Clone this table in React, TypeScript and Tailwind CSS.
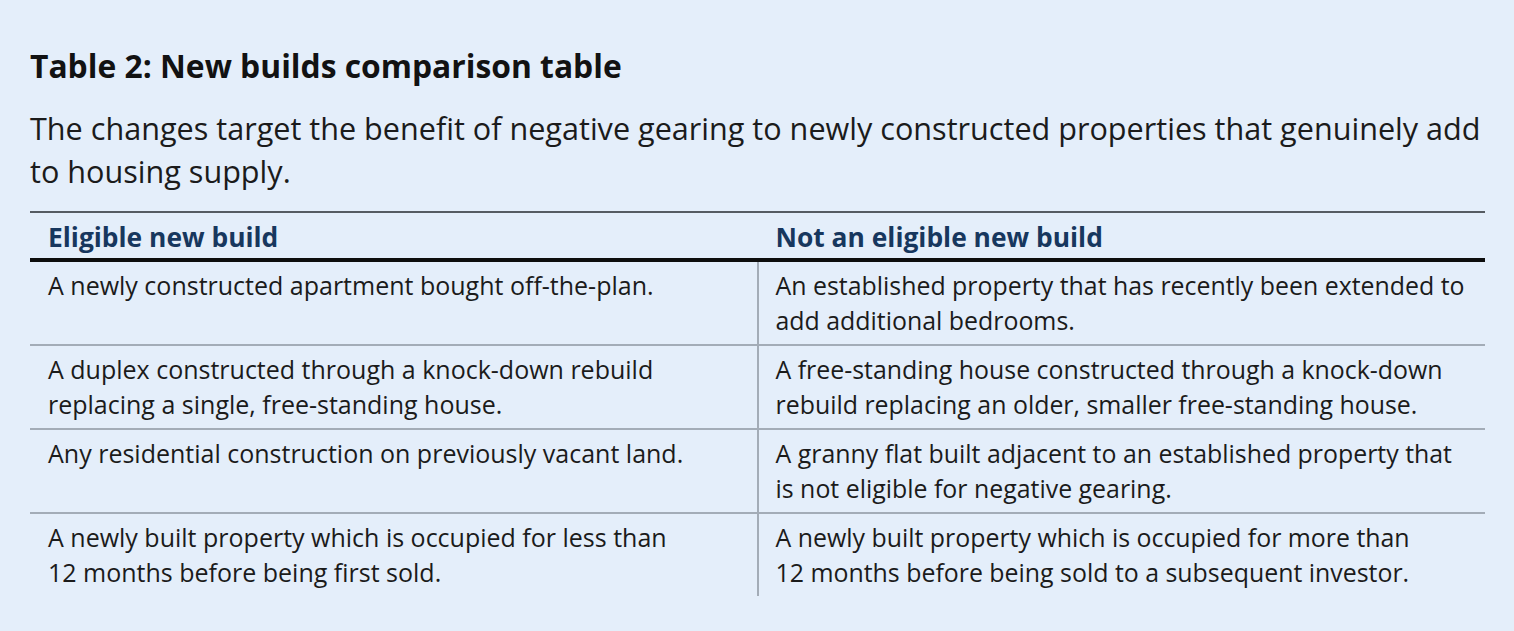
const rows: [string[], string[]][] = [
  [
    ['A newly constructed apartment bought off-the-plan.'],
    ['An established property that has recently been extended to', 'add additional bedrooms.'],
  ],
  [
    ['A duplex constructed through a knock-down rebuild', 'replacing a single, free-standing house.'],
    ['A free-standing house constructed through a knock-down', 'rebuild replacing an older, smaller free-standing house.'],
  ],
  [
    ['Any residential construction on previously vacant land.'],
    ['A granny flat built adjacent to an established property that', 'is not eligible for negative gearing.'],
  ],
  [
    ['A newly built property which is occupied for less than', '12 months before being first sold.'],
    ['A newly built property which is occupied for more than', '12 months before being sold to a subsequent investor.'],
  ],
];

function Lines({ lines }: { lines: string[] }) {
  return (
    <>
      {lines.map((l) => (
        <div key={l} className="whitespace-nowrap">
          {l}
        </div>
      ))}
    </>
  );
}

export default function App() {
  return (
    <div className="min-h-[631px] bg-[#e4eefa] pl-[30px] pr-[29px] pt-[46px] font-['Open_Sans',sans-serif] text-[#1b1b1b]">
      <h1 className="text-[31.8px] font-bold leading-[40px] text-[#121212]">
        Table 2: New builds comparison table
      </h1>
      <p className="mt-[21px] text-[30.6px] leading-[43px]">
        <span className="whitespace-nowrap">
          The changes target the benefit of negative gearing to newly constructed properties that genuinely add
        </span>
        <br />
        to housing supply.
      </p>

      <div className="mt-[18px] border-t-2 border-[#555b62]">
        <div className="grid grid-cols-2 border-b-4 border-[#0d0d0d] pt-[3px] text-[26.4px] font-bold leading-[42px] text-[#17375e]">
          <div className="pl-[18px]">Eligible new build</div>
          <div className="pl-[18px]">Not an eligible new build</div>
        </div>

        {rows.map(([left, right], i) => (
          <div
            key={i}
            className={`grid grid-cols-2 text-[25px] leading-[35px] ${i > 0 ? 'border-t-2 border-[#a3acb7]' : ''}`}
          >
            <div className="pb-[6px] pl-[18px] pt-[6px]">
              <Lines lines={left} />
            </div>
            <div className="-ml-px border-l-2 border-[#a3acb7] pb-[6px] pl-[17px] pt-[6px] text-[24.9px]">
              <Lines lines={right} />
            </div>
          </div>
        ))}
      </div>
    </div>
  );
}
